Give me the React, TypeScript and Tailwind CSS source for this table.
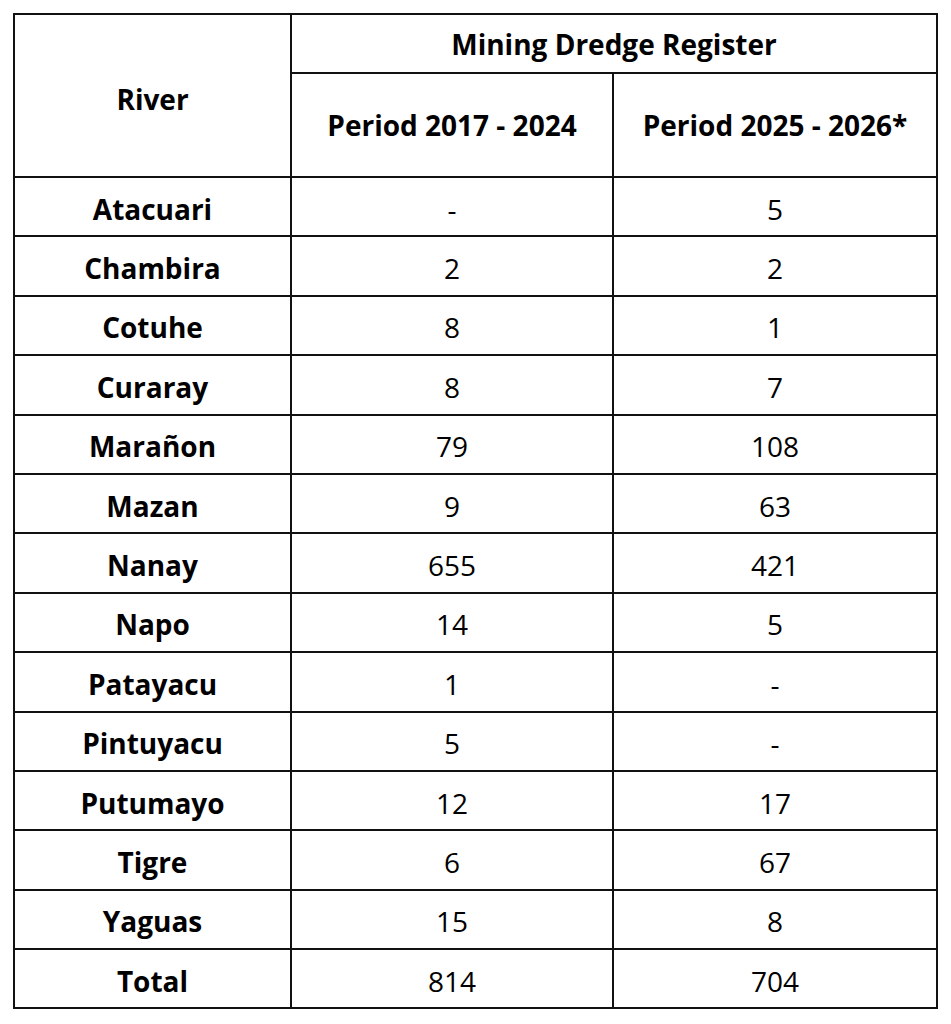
import React from "react";

const rows: [string, string, string][] = [
  ["Atacuari", "-", "5"],
  ["Chambira", "2", "2"],
  ["Cotuhe", "8", "1"],
  ["Curaray", "8", "7"],
  ["Marañon", "79", "108"],
  ["Mazan", "9", "63"],
  ["Nanay", "655", "421"],
  ["Napo", "14", "5"],
  ["Patayacu", "1", "-"],
  ["Pintuyacu", "5", "-"],
  ["Putumayo", "12", "17"],
  ["Tigre", "6", "67"],
  ["Yaguas", "15", "8"],
  ["Total", "814", "704"],
];

export default function App() {
  return (
    <div
      className="w-[951px] h-[1024px] bg-white pt-[13px] pl-[13px] text-black"
      style={{ fontFamily: '"Open Sans", "Liberation Sans", sans-serif' }}
    >
      <div className="grid w-[925px] grid-cols-[275px_320px_322px] grid-rows-[57px_102px_repeat(14,57.4px)] gap-[2px] border-2 border-[#111] bg-[#111] text-[28px] leading-none">
        <div className="row-span-2 flex items-center justify-center bg-white font-bold pt-[6px]">River</div>
        <div className="col-span-2 flex items-center justify-center bg-white font-bold">Mining Dredge Register</div>
        <div className="flex items-center justify-center bg-white font-bold">Period 2017 - 2024</div>
        <div className="flex items-center justify-center bg-white font-bold">Period 2025 - 2026*</div>
        {rows.map(([r, a, b]) => (
          <React.Fragment key={r}>
            <div className="flex items-center justify-center bg-white font-bold pt-[4px]">{r}</div>
            <div className="flex items-center justify-center bg-white pt-[4px]">{a}</div>
            <div className="flex items-center justify-center bg-white pt-[4px]">{b}</div>
          </React.Fragment>
        ))}
      </div>
    </div>
  );
}
